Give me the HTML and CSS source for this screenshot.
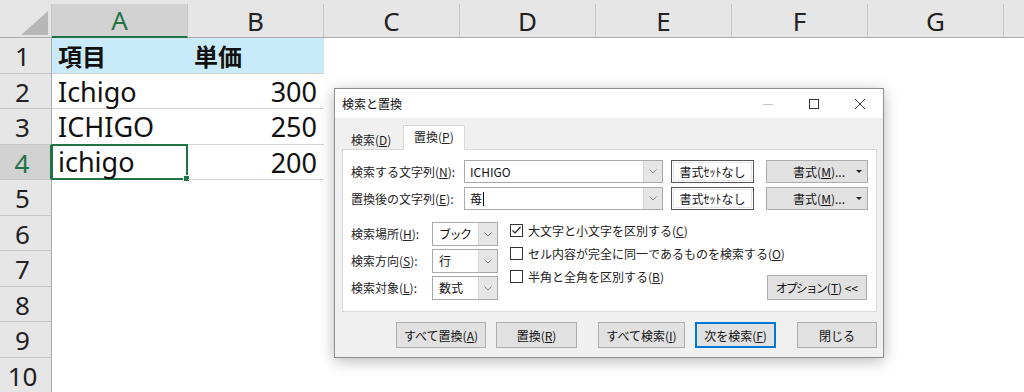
FILE: index.html
```html
<!DOCTYPE html>
<html lang="ja">
<head>
<meta charset="utf-8">
<title>検索と置換</title>
<link rel="stylesheet" href="styles.css">
</head>
<body>
<div class="sheet">
  <div class="hrow">
    <div class="corner"><span class="tri-corner"></span></div>
    <div class="ch ch-on"><span>A</span></div>
    <div class="ch"><span>B</span></div>
    <div class="ch"><span>C</span></div>
    <div class="ch"><span>D</span></div>
    <div class="ch"><span>E</span></div>
    <div class="ch"><span>F</span></div>
    <div class="ch"><span>G</span></div>
    <div class="ch last"></div>
  </div>
  <div class="row">
    <div class="rn">1</div>
    <div class="cell head line">項目</div>
    <div class="cell head line">単価</div>
  </div>
  <div class="row">
    <div class="rn">2</div>
    <div class="cell line">Ichigo</div>
    <div class="cell num line">300</div>
  </div>
  <div class="row">
    <div class="rn">3</div>
    <div class="cell line">ICHIGO</div>
    <div class="cell num line">250</div>
  </div>
  <div class="row">
    <div class="rn rsel">4</div>
    <div class="cell line active">ichigo<span class="handle"></span></div>
    <div class="cell num line">200</div>
  </div>
  <div class="row"><div class="rn">5</div></div>
  <div class="row"><div class="rn">6</div></div>
  <div class="row"><div class="rn">7</div></div>
  <div class="row"><div class="rn">8</div></div>
  <div class="row"><div class="rn">9</div></div>
  <div class="row"><div class="rn">10</div></div>
</div>

<div class="dialog">
  <div class="titlebar">
    <div class="title">検索と置換</div>
    <div class="wbtn"><svg width="12" height="12" viewBox="0 0 12 12"><line x1="1" y1="6.5" x2="11" y2="6.5" stroke="#c4c4c4" stroke-width="1"/></svg></div>
    <div class="wbtn"><svg width="12" height="12" viewBox="0 0 12 12"><rect x="1.5" y="1.5" width="9" height="9" fill="none" stroke="#333" stroke-width="1"/></svg></div>
    <div class="wbtn"><svg width="12" height="12" viewBox="0 0 12 12"><path d="M1 1 L11 11 M11 1 L1 11" stroke="#333" stroke-width="1"/></svg></div>
  </div>
  <div class="tabs">
    <div class="tab">検索(<u>D</u>)</div>
    <div class="tab on">置換(<u>P</u>)</div>
  </div>
  <div class="panel">
    <div class="frow">
      <div class="flabel">検索する文字列(<u>N</u>):</div>
      <div class="combo"><span class="cval">ICHIGO</span><span class="arrow"><svg width="8" height="5" viewBox="0 0 8 5"><polyline points="0.5,0.5 4,4 7.5,0.5" fill="none" stroke="#888" stroke-width="1"/></svg></span></div>
      <div class="preview">書式ｾｯﾄなし</div>
      <div class="btn fmt">書式(<u>M</u>)...<span class="tri"></span></div>
    </div>
    <div class="frow">
      <div class="flabel">置換後の文字列(<u>E</u>):</div>
      <div class="combo"><span class="cval">苺<span class="caret"></span></span><span class="arrow"><svg width="8" height="5" viewBox="0 0 8 5"><polyline points="0.5,0.5 4,4 7.5,0.5" fill="none" stroke="#888" stroke-width="1"/></svg></span></div>
      <div class="preview">書式ｾｯﾄなし</div>
      <div class="btn fmt">書式(<u>M</u>)...<span class="tri"></span></div>
    </div>
    <div class="opts">
      <div class="selcol">
        <div class="srow"><div class="slabel">検索場所(<u>H</u>):</div><div class="dd"><span class="cval narrow">ブック</span><span class="arrow"><svg width="8" height="5" viewBox="0 0 8 5"><polyline points="0.5,0.5 4,4 7.5,0.5" fill="none" stroke="#888" stroke-width="1"/></svg></span></div></div>
        <div class="srow"><div class="slabel">検索方向(<u>S</u>):</div><div class="dd"><span class="cval">行</span><span class="arrow"><svg width="8" height="5" viewBox="0 0 8 5"><polyline points="0.5,0.5 4,4 7.5,0.5" fill="none" stroke="#888" stroke-width="1"/></svg></span></div></div>
        <div class="srow"><div class="slabel">検索対象(<u>L</u>):</div><div class="dd"><span class="cval">数式</span><span class="arrow"><svg width="8" height="5" viewBox="0 0 8 5"><polyline points="0.5,0.5 4,4 7.5,0.5" fill="none" stroke="#888" stroke-width="1"/></svg></span></div></div>
      </div>
      <div class="checks">
        <div class="crow"><span class="box"><svg width="11" height="11" viewBox="0 0 11 11"><polyline points="1.5,5.5 4,8 9.5,2" fill="none" stroke="#222" stroke-width="1.2"/></svg></span>大文字と小文字を区別する(<u>C</u>)</div>
        <div class="crow"><span class="box"></span>セル内容が完全に同一であるものを検索する(<u>O</u>)</div>
        <div class="crow"><span class="box"></span>半角と全角を区別する(<u>B</u>)</div>
      </div>
      <div class="optcol">
        <div class="btn optbtn"><span class="narrow2">オプション</span>(<u>T</u>) &lt;&lt;</div>
      </div>
    </div>
  </div>
  <div class="actions">
    <div class="btn w90">すべて置換(<u>A</u>)</div>
    <div class="btn w81">置換(<u>R</u>)</div>
    <div class="btn w87 sep">すべて検索(<u>I</u>)</div>
    <div class="btn w81 def">次を検索(<u>F</u>)</div>
    <div class="btn w80 sep">閉じる</div>
  </div>
</div>
</body>
</html>
```

FILE: styles.css
```css
html, body {
  margin: 0;
  padding: 0;
  background: #fff;
  overflow: hidden;
}
body {
  width: 1024px;
  height: 392px;
  position: relative;
  font-family: "Noto Sans", "Noto Sans CJK JP", sans-serif;
}

/* ---------- sheet ---------- */
.sheet {
  display: flex;
  flex-direction: column;
  width: 1024px;
}
.hrow {
  display: flex;
  height: 38px;
  padding-top: 4px;
  box-sizing: border-box;
  background: #e6e6e6;
  border-bottom: 1px solid #ababab;
}
.corner {
  width: 52px;
  flex: 0 0 52px;
  box-sizing: border-box;
  border-right: 1px solid #c6c6c6;
  display: flex;
  justify-content: flex-end;
  align-items: flex-end;
  padding: 0 3px 2px 0;
}
.tri-corner {
  display: block;
  width: 0;
  height: 0;
  border-left: 27px solid transparent;
  border-bottom: 24px solid #b7b7b7;
}
.ch {
  width: 136px;
  flex: 0 0 136px;
  box-sizing: border-box;
  border-right: 1px solid #c6c6c6;
  display: flex;
  justify-content: center;
  align-items: center;
  font-size: 26px;
  color: #222;
}
.ch span { line-height: 30px; }
.ch.last { flex: 1 1 auto; width: auto; border-right: none; }
.ch.ch-on {
  background: #d2d2d2;
  color: #217346;
  border-bottom: 2px solid #217346;
  margin-bottom: -1px;
}
.row {
  display: flex;
  height: 35.5px;
}
.rn {
  width: 52px;
  flex: 0 0 52px;
  box-sizing: border-box;
  background: #e6e6e6;
  border-right: 1px solid #ababab;
  border-bottom: 1px solid #c6c6c6;
  text-align: center;
  padding-right: 6px;
  font-size: 26px;
  line-height: 36px;
  color: #222;
}
.rn.rsel {
  background: #d2d2d2;
  color: #217346;
  border-right: 2px solid #217346;
}
.cell {
  width: 136px;
  flex: 0 0 136px;
  box-sizing: border-box;
  position: relative;
  padding: 0 7px 0 6px;
  font-size: 27px;
  line-height: 35px;
  color: #111;
  white-space: nowrap;
}
.cell.line { border-bottom: 1px solid #d4d4d4; }
.cell.head {
  background: #c9eaf8;
  font-weight: 700;
  font-size: 24px;
  font-family: "Noto Sans CJK JP", sans-serif;
}
.cell.num { text-align: right; }
.cell.active {
  border: 2px solid #217346;
  margin: -1px 0 0 -1px;
  flex-basis: 137px;
  width: 137px;
  padding-left: 5px;
  line-height: 32px;
}
.handle {
  position: absolute;
  right: -4px;
  bottom: -4px;
  width: 5px;
  height: 5px;
  background: #217346;
  border: 1px solid #fff;
}

/* ---------- dialog ---------- */
.dialog {
  position: absolute;
  left: 334px;
  top: 88px;
  width: 550px;
  height: 270px;
  box-sizing: border-box;
  background: #f0f0f0;
  border: 1px solid #8e8e8e;
  box-shadow: 0 3px 14px rgba(0, 0, 0, 0.28);
  display: flex;
  flex-direction: column;
  font-family: "Noto Sans CJK JP", "Noto Sans", sans-serif;
  font-size: 12px;
  color: #000;
}
.dialog u { text-underline-offset: 1px; }
.titlebar {
  height: 29px;
  flex: none;
  background: #fff;
  display: flex;
  align-items: center;
}
.title {
  flex: 1;
  padding-left: 7px;
  font-size: 12px;
  color: #111;
}
.wbtn {
  width: 46px;
  height: 29px;
  display: flex;
  align-items: center;
  justify-content: center;
}
.wbtn svg { display: block; }
.tabs {
  height: 31px;
  flex: none;
  display: flex;
  align-items: flex-end;
  padding-left: 7px;
  position: relative;
  z-index: 1;
}
.tab {
  width: 61px;
  height: 19px;
  box-sizing: border-box;
  line-height: 19px;
  padding-left: 9px;
  color: #222;
}
.tab.on {
  width: 62px;
  height: 25px;
  line-height: 22px;
  padding-left: 10px;
  background: #fff;
  border: 1px solid #d9d9d9;
  border-bottom: none;
  margin-bottom: -1px;
}
.panel {
  margin: 0 6px 0 7px;
  height: 163px;
  flex: none;
  box-sizing: border-box;
  background: #fff;
  border: 1px solid #d9d9d9;
  padding: 10px 8px 11px 8px;
  display: flex;
  flex-direction: column;
  gap: 4px;
}
.frow {
  display: flex;
  height: 23px;
  align-items: stretch;
}
.flabel {
  width: 113px;
  flex: none;
  line-height: 23px;
  color: #222;
}
.combo, .dd {
  display: flex;
  box-sizing: border-box;
  border: 1px solid #a9a9a9;
  background: #fff;
}
.combo { width: 199px; flex: none; }
.cval {
  flex: 1;
  padding-left: 5px;
  line-height: 21px;
  color: #111;
  display: flex;
  align-items: center;
}
.narrow { letter-spacing: -1.5px; }
.narrow2 { letter-spacing: -2px; margin-right: 1px; }
.caret {
  display: inline-block;
  width: 1px;
  height: 14px;
  background: #000;
  margin-left: 1px;
}
.arrow {
  width: 18px;
  flex: none;
  background: #e6e6e6;
  border-left: 1px solid #d6d6d6;
  display: flex;
  align-items: center;
  justify-content: center;
}
.arrow svg { display: block; }
.preview {
  width: 83px;
  flex: none;
  margin-left: 8px;
  box-sizing: border-box;
  border: 1px solid #555;
  box-shadow: inset 0 0 0 1px #fff, inset 0 0 0 2px #e6e6e6;
  background: #fff;
  text-align: center;
  line-height: 21px;
  color: #111;
}
.btn {
  box-sizing: border-box;
  background: #e1e1e1;
  border: 1px solid #adadad;
  display: flex;
  align-items: center;
  justify-content: center;
  color: #111;
  white-space: nowrap;
}
.btn.fmt {
  width: 102px;
  flex: none;
  margin-left: 12px;
  position: relative;
  padding-right: 22px;
  justify-content: flex-end;
}
.tri {
  position: absolute;
  right: 5px;
  top: 9px;
  width: 0;
  height: 0;
  border-left: 3px solid transparent;
  border-right: 3px solid transparent;
  border-top: 3px solid #222;
}
.opts {
  display: flex;
  margin-top: 8px;
  height: 78px;
}
.selcol {
  display: flex;
  flex-direction: column;
  gap: 3px;
  width: 147px;
  flex: none;
}
.srow {
  display: flex;
  height: 24px;
}
.slabel {
  width: 81px;
  flex: none;
  line-height: 24px;
  color: #222;
}
.dd { width: 66px; flex: none; }
.dd .cval { line-height: 22px; padding-left: 6px; }
.checks {
  margin-left: 12px;
  display: flex;
  flex-direction: column;
  gap: 7px;
  flex: 1;
  min-width: 0;
}
.crow {
  display: flex;
  align-items: center;
  height: 16px;
  color: #222;
  white-space: nowrap;
}
.box {
  width: 13px;
  height: 13px;
  box-sizing: border-box;
  border: 1px solid #333;
  background: #fff;
  margin-right: 5px;
  display: flex;
  align-items: center;
  justify-content: center;
  flex: none;
}
.box svg { display: block; }
.optcol {
  display: flex;
  align-items: flex-end;
  flex: none;
}
.optbtn {
  width: 100px;
  height: 25px;
  margin-right: 1px;
}
.actions {
  display: flex;
  justify-content: flex-end;
  padding: 10px 6px 0 0;
  gap: 10px;
}
.actions .btn { height: 26px; }
.actions .sep { margin-left: 11px; }
.w90 { width: 90px; }
.w81 { width: 81px; }
.w87 { width: 87px; }
.w80 { width: 80px; }
.btn.def {
  border: 1px solid #0078d7;
  box-shadow: inset 0 0 0 1px #0078d7;
}
```
